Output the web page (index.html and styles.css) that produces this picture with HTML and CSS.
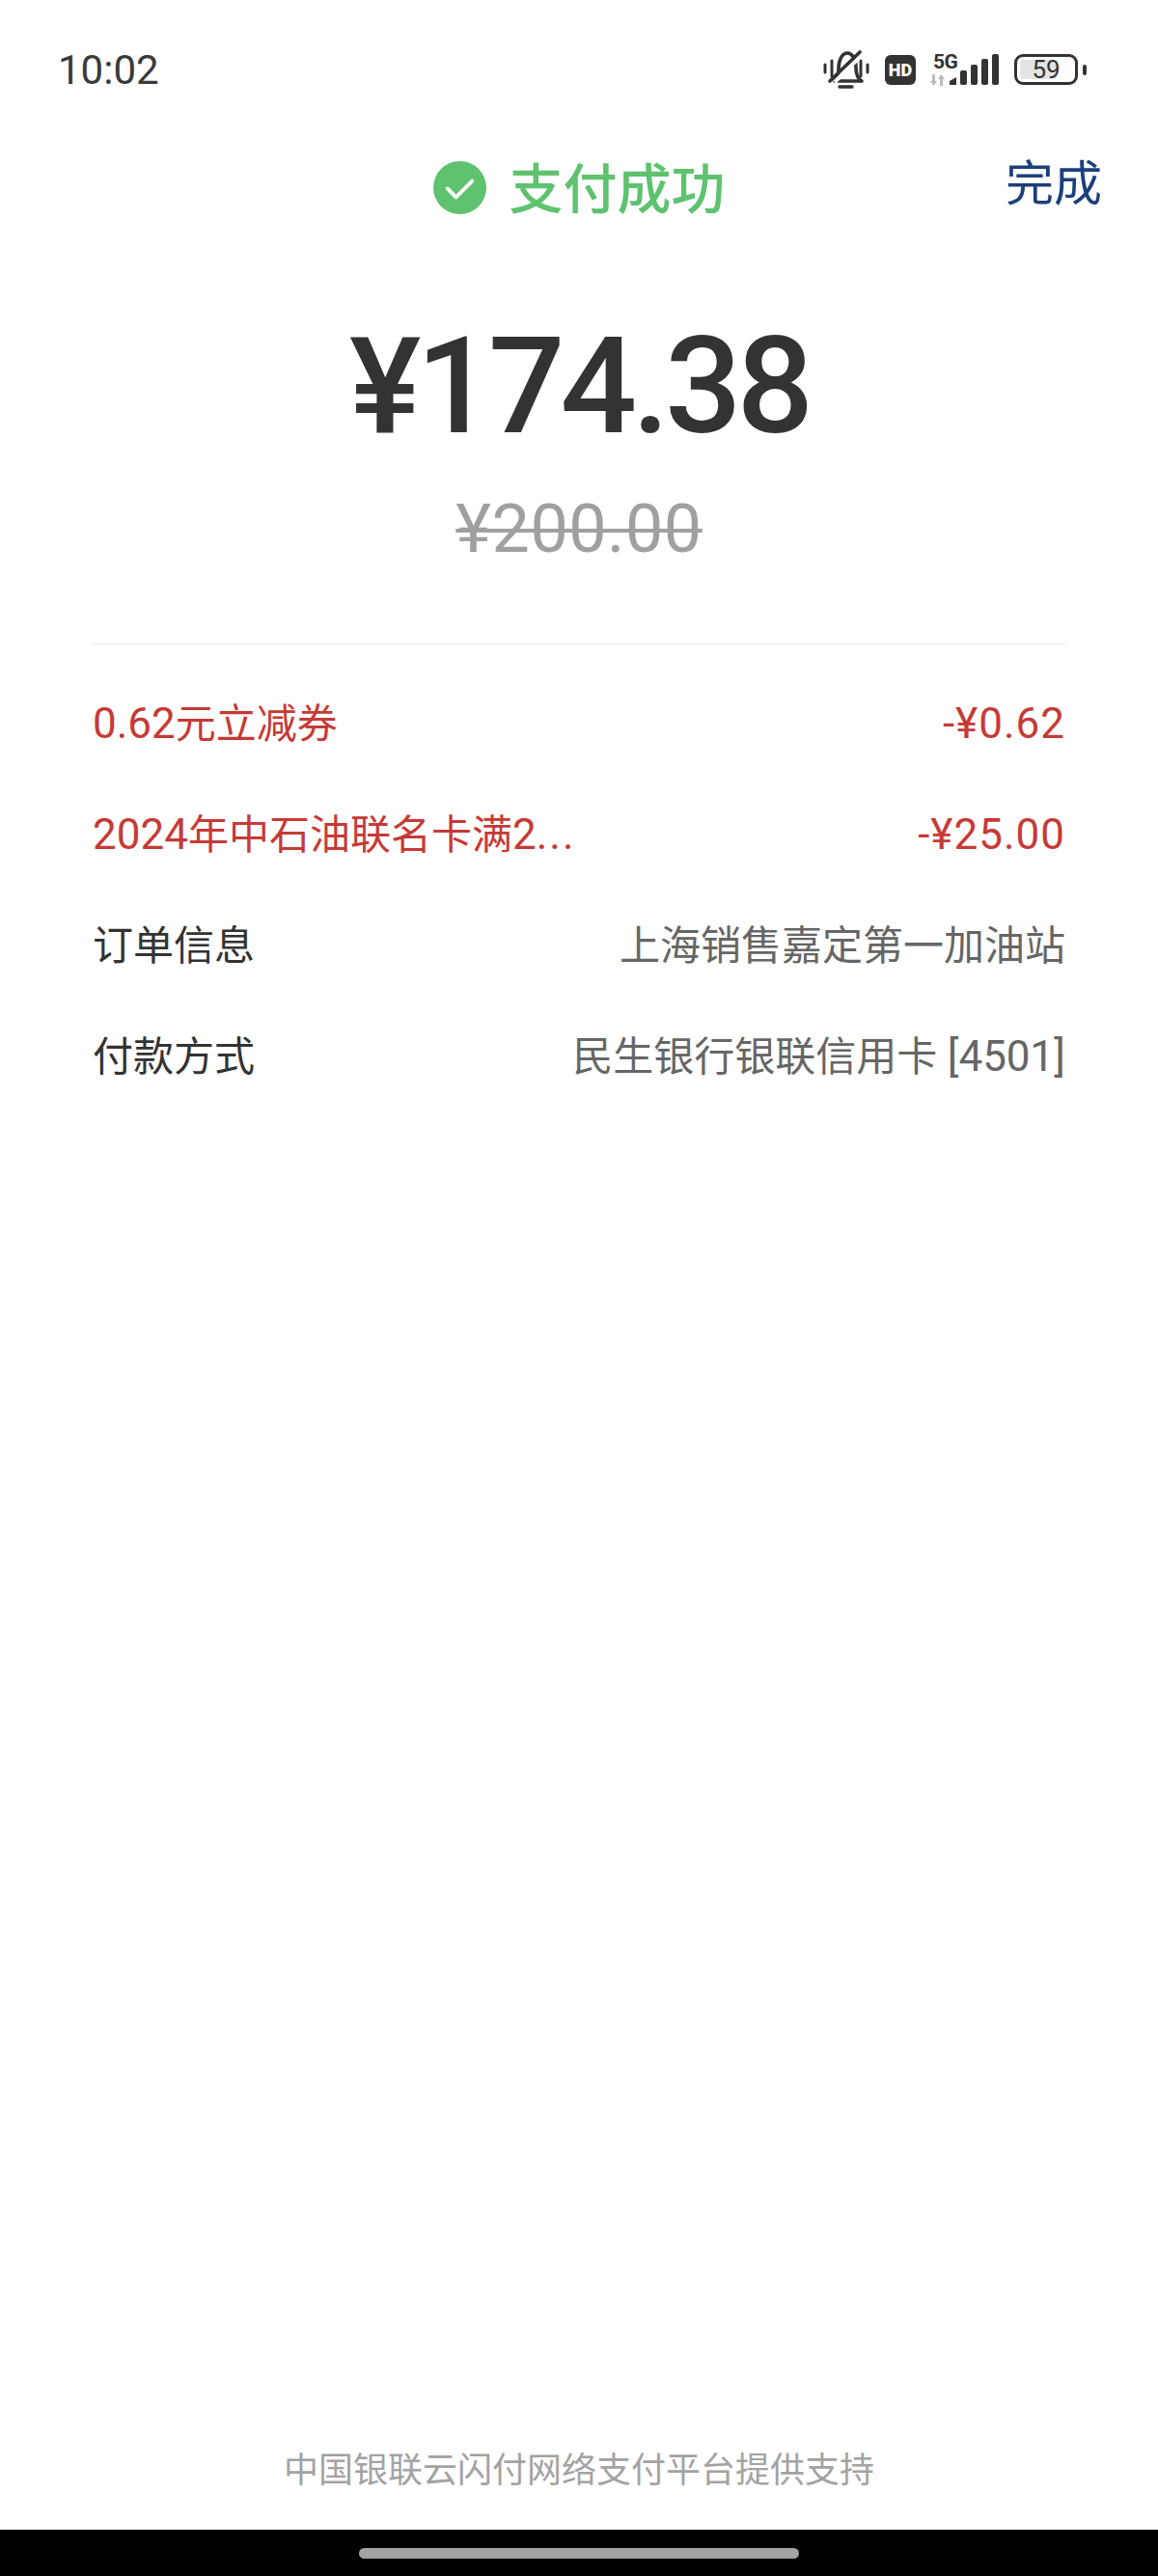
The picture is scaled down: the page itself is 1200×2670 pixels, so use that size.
FILE: index.html
```html
<!doctype html>
<html lang="zh">
  <head>
    <meta charset="UTF-8" />
    <meta name="viewport" content="width=device-width, initial-scale=1.0" />
    <title>支付成功</title>
    <link rel="stylesheet" href="styles.css">
  </head>
  <body>
    <div class="screen">
      <div class="status-bar">
        <span class="clock">10:02</span>
        <div class="status-icons">
          <svg class="icon-bell" width="48" height="41" viewBox="0 0 48 41">
            <path d="M2 15v8M9 11v16M39 11v16M46 15v8" fill="none" stroke="#333" stroke-width="3" stroke-linecap="round" />
            <path d="M12 32c3-3 4-7 4-13 0-9 4-16 9-16s9 6 9 15c0 6 1 11 6 14z" fill="none" stroke="#333" stroke-width="3.6" stroke-linejoin="round" />
            <path d="M17 38h13" stroke="#333" stroke-width="3.4" stroke-linecap="round" />
            <path d="M12 33 41 4" stroke="#fff" stroke-width="4" />
            <path d="M7 32 38 2" stroke="#333" stroke-width="3.6" stroke-linecap="round" />
          </svg>
          <span class="hd">HD</span>
          <div class="signal">
            <div class="net">
              <span class="net-5g">5G</span>
              <svg width="17" height="12" viewBox="0 0 17 12">
                <path d="M3 0h3v7h2l-3.500 5L1 7h2zM11 12h3V5h2l-3.500-5L9 5h2z" fill="#bbb" />
              </svg>
            </div>
            <svg class="bars" width="51" height="32" viewBox="0 0 51 32">
              <path d="M0 32v-4l7-4v8z" fill="#333" />
              <rect x="11" y="17" width="7" height="15" rx="2" fill="#333" />
              <rect x="22" y="11" width="7" height="21" rx="2" fill="#333" />
              <rect x="33" y="5" width="7" height="27" rx="2" fill="#333" />
              <rect x="44" y="0" width="7" height="32" rx="2" fill="#333" />
            </svg>
          </div>
          <div class="battery">
            <div class="battery-body">
              <div class="battery-fill"></div>
              <span class="battery-num">59</span>
            </div>
            <div class="battery-cap"></div>
          </div>
        </div>
      </div>

      <div class="title-bar">
        <div class="title">
          <svg width="55" height="55" viewBox="0 0 56 56">
            <circle cx="28" cy="28" r="28" fill="#5ec26f" />
            <path d="M15 29l9 9 17-17" fill="none" stroke="#fff" stroke-width="4" stroke-linecap="round" stroke-linejoin="round" />
          </svg>
          <span class="title-text">支付成功</span>
        </div>
        <a class="done">完成</a>
      </div>

      <div class="amount">¥174.38</div>
      <div class="amount-old">¥200.00</div>

      <div class="details">
        <div class="row row-red"><span><span class="num">0.62</span>元立减券</span><span class="num off">-¥0.62</span></div>
        <div class="row row-red"><span><span class="num">2024</span>年中石油联名卡满<span class="num">2<span class="dots">...</span></span></span><span class="num off">-¥25.00</span></div>
        <div class="row"><span>订单信息</span><span class="row-val">上海销售嘉定第一加油站</span></div>
        <div class="row"><span>付款方式</span><span class="row-val">民生银行银联信用卡 <span class="num">[4501]</span></span></div>
      </div>

      <div class="footer">中国银联云闪付网络支付平台提供支持</div>
      <div class="nav-bar"><div class="nav-handle"></div></div>
    </div>
  </body>
</html>
```

FILE: styles.css
```css
body {
  margin: 0;
  background: #ffffff;
  font-family: 'Roboto', 'Noto Sans CJK SC', sans-serif;
  color: #333;
}
.screen {
  height: 2670px;
  display: flex;
  flex-direction: column;
  overflow: hidden;
}
.status-bar {
  height: 72px;
  margin-top: 36px;
  padding: 0 74px 0 60px;
  display: flex;
  align-items: center;
  justify-content: space-between;
}
.clock {
  font-size: 42px;
  color: #3a3a3a;
}
.status-icons {
  display: flex;
  align-items: center;
  gap: 16px;
}
.hd {
  width: 32px;
  height: 31px;
  background: #333;
  color: #fff;
  border-radius: 6px;
  font-size: 18px;
  font-weight: 900;
  line-height: 31px;
  text-align: center;
}
.signal {
  position: relative;
  width: 72px;
  height: 36px;
  margin-left: -2px;
  display: flex;
  align-items: center;
  justify-content: flex-end;
}
.net {
  position: absolute;
  left: 0;
  top: -2px;
  display: flex;
  flex-direction: column;
}
.net-5g {
  margin-left: 4px;
  font-size: 21px;
  font-weight: 700;
  line-height: 24px;
  letter-spacing: -0.5px;
}
.net svg {
  margin-top: 1px;
}
.battery {
  display: flex;
  align-items: center;
  gap: 5px;
}
.battery-body {
  position: relative;
  width: 66px;
  height: 32px;
  box-sizing: border-box;
  border: 3.5px solid #333;
  border-radius: 9px;
  display: flex;
  align-items: center;
  justify-content: center;
}
.battery-fill {
  position: absolute;
  left: 3px;
  top: 3px;
  bottom: 3px;
  width: 38px;
  background: #e4e4e4;
  border-radius: 2px;
}
.battery-num {
  position: relative;
  font-size: 26px;
  line-height: 26px;
}
.battery-cap {
  width: 4px;
  height: 11px;
  background: #333;
  border-radius: 2px;
}
.title-bar {
  height: 80px;
  margin-top: 46px;
  display: grid;
  grid-template-columns: 1fr auto 1fr;
  align-items: center;
}
.title {
  grid-column: 2;
  display: flex;
  align-items: center;
  gap: 24px;
  font-size: 56px;
  font-weight: 500;
  color: #5ec26f;
}
.title-text {
  margin-top: -6px;
}
.done {
  justify-self: end;
  margin: 0 58px 6px 0;
  font-size: 50px;
  line-height: 60px;
  color: #1c3f7c;
}
.amount {
  margin-top: 86px;
  text-align: center;
  font-size: 140px;
  font-weight: 500;
  line-height: 160px;
  letter-spacing: -5px;
  color: #333;
}
.amount-old {
  margin-top: 28px;
  text-align: center;
  font-size: 70px;
  line-height: 80px;
  letter-spacing: 0.5px;
  color: #a0a0a0;
  text-decoration: line-through;
  text-decoration-thickness: 4px;
}
.details {
  margin: 79px 96px 0;
  padding-top: 25px;
  border-top: 1px solid #ebebeb;
}
.row {
  display: flex;
  align-items: baseline;
  justify-content: space-between;
  font-size: 42px;
  line-height: 115px;
}
.row-red {
  color: #c63a36;
}
.num {
  font-size: 44px;
}
.off {
  letter-spacing: 1px;
}
.dots {
  letter-spacing: 2px;
}
.row-val {
  color: #666;
}
.footer {
  margin-top: auto;
  height: 72px;
  text-align: center;
  font-size: 36px;
  line-height: 72px;
  color: #a3a3a3;
}
.nav-bar {
  height: 48px;
  margin-top: 25px;
  background: #000;
  display: flex;
  justify-content: center;
  padding-top: 19px;
  box-sizing: border-box;
}
.nav-handle {
  width: 456px;
  height: 11px;
  background: #a3a3a3;
  border-radius: 6px;
}
```
